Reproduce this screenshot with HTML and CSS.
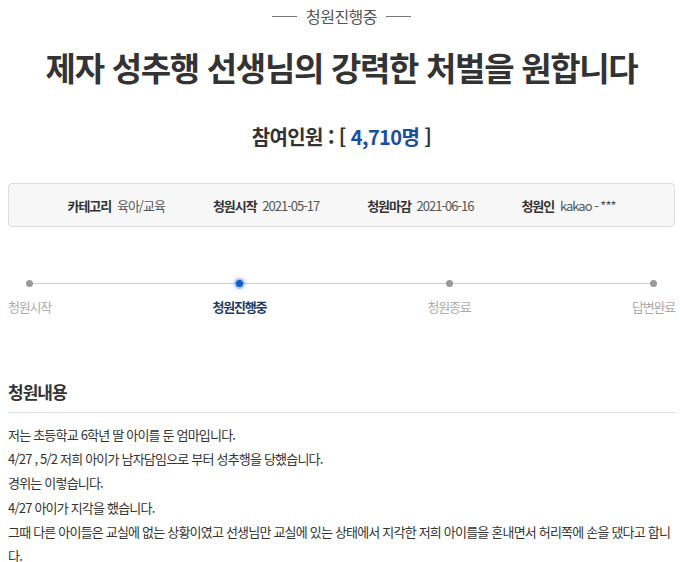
FILE: index.html
```html
<!DOCTYPE html>
<html lang="ko">
<head>
  <meta charset="UTF-8" />
  <meta name="viewport" content="width=device-width, initial-scale=1.0" />
  <title>청원 상세</title>
  <link rel="stylesheet" href="styles.css">
</head>
<body>
  <div class="page">
    <div class="status">청원진행중</div>
    <h1 class="title">제자 성추행 선생님의 강력한 처벌을 원합니다</h1>
    <p class="count">참여인원 : [ <span class="num">4,710명</span> ]</p>

    <ul class="info">
      <li><b>카테고리</b> 육아/교육</li>
      <li><b>청원시작</b> 2021-05-17</li>
      <li><b>청원마감</b> 2021-06-16</li>
      <li><b>청원인</b> kakao - ***</li>
    </ul>

    <div class="steps">
      <div class="steps-line"></div>
      <div class="step"><i class="dot"></i><span>청원시작</span></div>
      <div class="step active"><i class="dot"></i><span>청원진행중</span></div>
      <div class="step"><i class="dot"></i><span>청원종료</span></div>
      <div class="step"><i class="dot"></i><span>답변완료</span></div>
    </div>

    <section class="content">
      <h2>청원내용</h2>
      <div class="body">
        <p>저는 초등학교 6학년 딸 아이를 둔 엄마입니다.</p>
        <p>4/27 , 5/2 저희 아이가 남자담임으로 부터 성추행을 당했습니다.</p>
        <p>경위는 이렇습니다.</p>
        <p>4/27 아이가 지각을 했습니다.</p>
        <p>그때 다른 아이들은 교실에 없는 상황이였고 선생님만 교실에 있는 상태에서 지각한 저희 아이를을 혼내면서 허리쪽에 손을 댔다고 합니다.</p>
      </div>
    </section>
  </div>
</body>
</html>
```

FILE: styles.css
```css
body {
  margin: 0;
  padding: 0;
  background: #fff;
  color: #333;
  font-family: "Noto Sans CJK KR", "Noto Sans", sans-serif;
}

.page {
  margin: 0 5px 0 8px;
}

.status {
  margin-top: 6px;
  height: 20px;
  display: flex;
  justify-content: center;
  align-items: center;
  gap: 9px;
  font-size: 16px;
  color: #555;
  letter-spacing: -0.5px;
}

.status::before,
.status::after {
  content: "";
  width: 25px;
  height: 1px;
  background: #777;
}

.title {
  margin: 21px 0 0;
  text-align: center;
  font-size: 33px;
  line-height: 40px;
  font-weight: 700;
  letter-spacing: -1.3px;
  color: #333;
}

.count {
  margin: 36px 0 0;
  text-align: center;
  font-size: 20px;
  line-height: 28px;
  font-weight: 700;
  letter-spacing: -0.6px;
  color: #333;
}

.count .num {
  color: #1b4f9e;
}

.info {
  list-style: none;
  margin: 32px 0 0;
  padding: 0;
  height: 42px;
  display: flex;
  justify-content: center;
  align-items: center;
  gap: 48px;
  background: #f7f7f7;
  border: 1px solid #ddd;
  border-radius: 4px;
  font-size: 13px;
  letter-spacing: -1px;
  color: #555;
}

.info b {
  color: #333;
  margin-right: 3px;
}

.steps {
  position: relative;
  margin-top: 53px;
  display: flex;
  justify-content: space-between;
}

.steps-line {
  position: absolute;
  top: 3px;
  left: 22px;
  right: 22px;
  height: 1px;
  background: #ccc;
}

.step {
  position: relative;
  display: flex;
  flex-direction: column;
  align-items: center;
  gap: 11px;
  font-size: 13px;
  line-height: 18px;
  letter-spacing: -1.2px;
  color: #aaa;
}

.dot {
  width: 7px;
  height: 7px;
  border-radius: 50%;
  background: #999;
}

.step.active {
  color: #1f3a64;
  font-weight: 700;
}

.step.active .dot {
  background: #0b5fc2;
  box-shadow: 0 0 0 2px rgba(11, 95, 194, 0.25), 0 0 4px 3px rgba(11, 95, 194, 0.15);
}

.content {
  margin-top: 64px;
}

.content h2 {
  margin: 0;
  padding-bottom: 8px;
  border-bottom: 1px solid #ddd;
  font-size: 17px;
  line-height: 24px;
  letter-spacing: -1px;
  color: #333;
}

.body {
  margin-top: 10px;
  font-size: 13px;
  line-height: 24.2px;
  letter-spacing: -0.8px;
  color: #333;
}

.body p {
  margin: 0;
}
```
